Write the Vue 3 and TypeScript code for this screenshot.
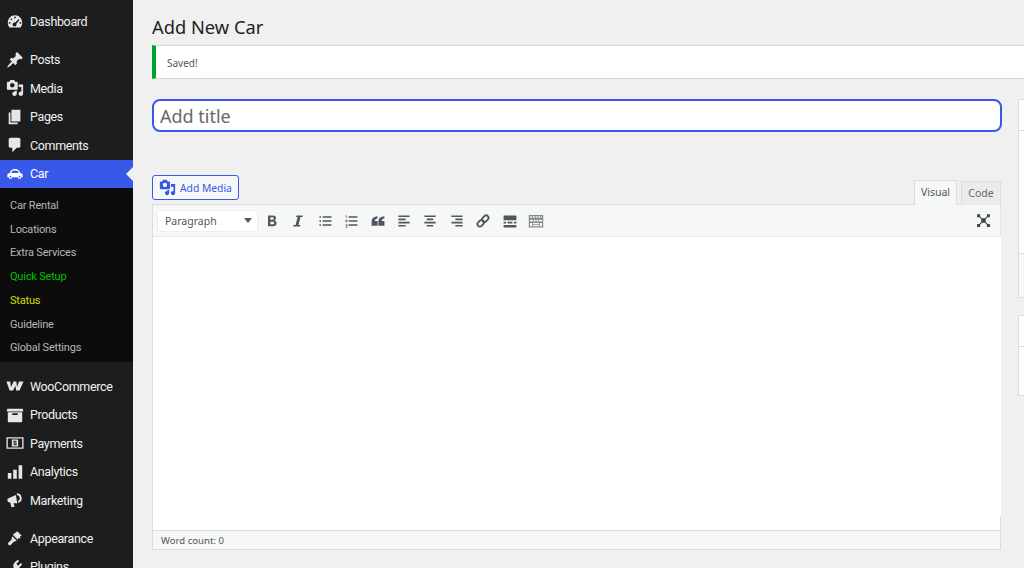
<script setup lang="ts">
type MenuItem = { label: string; icon: string; current?: boolean; gapBefore?: boolean }

const topItems: MenuItem[] = [
  { label: 'Dashboard', icon: 'dashboard' },
  { label: 'Posts', icon: 'posts', gapBefore: true },
  { label: 'Media', icon: 'media' },
  { label: 'Pages', icon: 'pages' },
  { label: 'Comments', icon: 'comments' },
  { label: 'Car', icon: 'car', current: true },
]

const subItems = [
  { label: 'Car Rental', tone: '' },
  { label: 'Locations', tone: '' },
  { label: 'Extra Services', tone: '' },
  { label: 'Quick Setup', tone: 'green' },
  { label: 'Status', tone: 'yellow' },
  { label: 'Guideline', tone: '' },
  { label: 'Global Settings', tone: '' },
]

const bottomItems: MenuItem[] = [
  { label: 'WooCommerce', icon: 'woo' },
  { label: 'Products', icon: 'products' },
  { label: 'Payments', icon: 'payments' },
  { label: 'Analytics', icon: 'analytics' },
  { label: 'Marketing', icon: 'marketing' },
  { label: 'Appearance', icon: 'appearance', gapBefore: true },
  { label: 'Plugins', icon: 'plugins' },
]

const icons: Record<string, string> = {
  dashboard: 'M3.760 16h12.480c1.100-1.430 1.760-3.210 1.760-5.140 0-4.620-3.580-8.360-8-8.360s-8 3.740-8 8.360c0 1.930.66 3.710 1.760 5.140zM10 4c.55 0 1 .45 1 1s-.45 1-1 1-1-.45-1-1 .45-1 1-1zM6 6c.55 0 1 .45 1 1s-.45 1-1 1-1-.45-1-1 .45-1 1-1zm8.010 1l1.020.87-3.450 4.130c.09.24.14.49.14.75 0 1.240-1 2.250-2.220 2.250-1.230 0-2.230-1.010-2.230-2.250S8.270 10.500 9.500 10.500c.21 0 .41.03.6.09zM4 10c.55 0 1 .45 1 1s-.45 1-1 1-1-.45-1-1 .45-1 1-1zm12 0c.55 0 1 .45 1 1s-.45 1-1 1-1-.45-1-1 .45-1 1-1z',
  posts: 'M10.440 3.020l1.820-1.820 6.360 6.350-1.830 1.820c-1.050-.68-2.480-.57-3.410.36l-.75.75c-.92.93-1.040 2.350-.35 3.410l-1.830 1.820-2.410-2.410-2.800 2.790c-.42.42-3.380 2.710-3.800 2.290s1.860-3.390 2.280-3.810l2.790-2.790L4.100 9.360l1.830-1.820c1.050.69 2.480.57 3.400-.36l.75-.75c.93-.92 1.050-2.350.36-3.410z',
  media: 'M13 11V4c0-.55-.45-1-1-1h-1.670L9 1H5L3.670 3H2c-.55 0-1 .45-1 1v7c0 .55.45 1 1 1h10c.55 0 1-.45 1-1zM7 4.500c1.380 0 2.500 1.120 2.500 2.500S8.380 9.500 7 9.500 4.500 8.380 4.500 7 5.620 4.500 7 4.500zM14 6h5v10.500c0 1.380-1.120 2.500-2.500 2.500S14 17.880 14 16.500s1.120-2.500 2.500-2.500c.17 0 .34.020.5.050V9h-3V6zm-4 8.050V13h2v3.500c0 1.380-1.120 2.500-2.500 2.500S7 17.880 7 16.500 8.120 14 9.500 14c.17 0 .34.020.5.050z',
  pages: 'M6 15V2h10v13H6zm-1 1h8v2H3V5h2v11z',
  comments: 'M5 2h9c1.100 0 2 .9 2 2v7c0 1.100-.9 2-2 2h-2l-5 5v-5H5c-1.100 0-2-.9-2-2V4c0-1.100.9-2 2-2z',
  car: 'M5.500 6.500C6.500 5 8 4.500 10 4.500s3.500.5 4.500 2L16 9l2.500 1v3.500H17a2 2 0 0 1-4 0H7a2 2 0 0 1-4 0H1.500V10L4 9zM7 6.800L6 9h8l-1-2.200c-.8-.5-1.800-.7-3-.7s-2.200.2-3 .7zM5 12a1 1 0 1 0 0 2 1 1 0 0 0 0-2zm10 0a1 1 0 1 0 0 2 1 1 0 0 0 0-2z',
  woo: 'M.500 5h4.200l.8 6 3-6h3l.7 6 2.300-6h5l-4.500 10h-3.700l-.9-5.200L7.800 15H4z',
  products: 'M19 4v2H1V4c0-.55.45-1 1-1h16c.55 0 1 .45 1 1zM2 7h16v10c0 .55-.45 1-1 1H3c-.55 0-1-.45-1-1V7zm11 3V8H7v2h6z',
  payments: 'M.500 3.500h19v13H.500zM2 5v10h16V5zM6.500 6h7v8h-7zM8.300 7.500v3h2.400v1h-2.400v1h3.400v-3H9.300v-1h2.400v-1z',
  analytics: 'M2 11h4v6.500H2zM8 7.500h4v10H8zM14 2.500h4v15h-4z',
  marketing: 'M1.500 8.500L11 4.500l1.500 9.500-4-.7 1 4.200-3.500.5-1.300-5.300-2.700-.5zM12 2.500a5.500 5.500 0 0 1 1.700 10.700l-.4-2A3.500 3.500 0 0 0 12 4.500z',
  appearance: 'M12.500 2.500l5 5-1.800.5.3 2.500-2.500-.2-.5 1.700-5.500-5.500zM7 8l5 5-2.500 1-1 .2-3 3.300c-.8.8-2 .8-2.700 0-.7-.7-.7-1.900 0-2.600l3.300-3 .2-1z',
  plugins: 'M13.100 2l1.400 1.400-3 3 2.100 2.100 3-3L18 7l-3 3.500c-1.600 1.500-3.700 1.800-5.300.9L6 15l-2 2-1-1 2-2 3.600-3.700c-.9-1.600-.6-3.700.9-5.300z',
}
</script>

<template>
  <div class="page">
    <aside class="sidebar">
      <nav class="menu">
        <a
          v-for="item in topItems"
          :key="item.label"
          class="menu-item"
          :class="{ current: item.current, 'gap-before': item.gapBefore }"
        >
          <svg class="menu-icon" viewBox="0 0 20 20" fill-rule="evenodd"><path :d="icons[item.icon]" /></svg>
          <span>{{ item.label }}</span>
        </a>
        <div class="submenu">
          <a v-for="sub in subItems" :key="sub.label" class="sub-item" :class="sub.tone">{{ sub.label }}</a>
        </div>
        <a
          v-for="item in bottomItems"
          :key="item.label"
          class="menu-item"
          :class="{ 'gap-before': item.gapBefore }"
        >
          <svg class="menu-icon" viewBox="0 0 20 20" fill-rule="evenodd"><path :d="icons[item.icon]" /></svg>
          <span>{{ item.label }}</span>
        </a>
      </nav>
    </aside>

    <main class="content">
      <h1 class="heading">Add New Car</h1>
      <div class="notice">Saved!</div>

      <div class="columns">
        <div class="primary">
          <input class="title-input" type="text" placeholder="Add title" />

          <div class="editor-top">
            <button class="add-media" type="button">
              <svg viewBox="0 0 20 20" width="17" height="17" fill="#3858e9" fill-rule="evenodd"><path :d="icons.media" /></svg>
              Add Media
            </button>
            <div class="tabs">
              <span class="tab active">Visual</span>
              <span class="tab">Code</span>
            </div>
          </div>

          <div class="editor">
            <div class="toolbar">
              <div class="format-select">
                <span>Paragraph</span>
                <i class="caret"></i>
              </div>
              <div class="tools">
                <svg class="tool" viewBox="0 0 20 20"><path d="M5 3h6c2.500 0 4 1.300 4 3.400 0 1.400-.8 2.500-2 3 1.700.4 2.700 1.700 2.700 3.400 0 2.400-1.800 3.700-4.500 3.700H5zm3 2.400v3h2.500c1.100 0 1.700-.6 1.700-1.500s-.6-1.500-1.700-1.500zm0 5.400v3.300h2.800c1.200 0 1.900-.6 1.900-1.700s-.7-1.600-1.900-1.600z" fill-rule="evenodd" /></svg>
                <svg class="tool" viewBox="0 0 20 20"><path d="M8 3h8l-.4 2h-2.500l-2.400 10H13l-.4 2H4l.4-2h2.600L9.500 5H7.600z" /></svg>
                <svg class="tool" viewBox="0 0 20 20"><path d="M3 4h2v2H3zM7 4h11v2H7zM3 9h2v2H3zM7 9h11v2H7zM3 14h2v2H3zM7 14h11v2H7z" /></svg>
                <svg class="tool" viewBox="0 0 20 20"><path d="M3 3h1.500v3H3.600V4H3zM7 4h11v2H7zM3 8.500h2.500v1L4 11h1.500v.7H3v-1l1.500-1.400H3zM7 9h11v2H7zM3 14h2.500v4H3v-.7h1.600V16.300H3.600v-.6h1V14.700H3zM7 14h11v2H7z" /></svg>
                <svg class="tool" viewBox="0 0 20 20"><path d="M9.500 4v2.500C7.300 7 6.200 8.200 6 10h3.500v6H2v-5.500C2 6.800 5 4.300 9.500 4zM18 4v2.500c-2.200.5-3.300 1.700-3.500 3.500H18v6h-7.500v-5.500c0-3.700 3-6.200 7.500-6.500z" /></svg>
                <svg class="tool" viewBox="0 0 20 20"><path d="M3 3h14v2H3zM3 7h9v2H3zM3 11h14v2H3zM3 15h9v2H3z" /></svg>
                <svg class="tool" viewBox="0 0 20 20"><path d="M3 3h14v2H3zM6 7h8v2H6zM3 11h14v2H3zM6 15h8v2H6z" /></svg>
                <svg class="tool" viewBox="0 0 20 20"><path d="M3 3h14v2H3zM8 7h9v2H8zM3 11h14v2H3zM8 15h9v2H8z" /></svg>
                <svg class="tool link-tool" viewBox="0 0 20 20">
                  <g transform="rotate(-45 10 10)" fill="none" stroke="#50575e" stroke-width="2.300">
                    <rect x="1.500" y="7" width="9" height="6" rx="3" />
                    <rect x="9.500" y="7" width="9" height="6" rx="3" />
                  </g>
                </svg>
                <svg class="tool" viewBox="0 0 20 20"><path d="M2 3h16v6H2zM2 11h3v2H2zM7 11h6v2H7zM15 11h3v2h-3zM2 15h16v3H2z" /></svg>
                <svg class="tool sink" viewBox="0 0 20 20"><path fill-rule="evenodd" d="M1 2.500h18v15.500H1zM2.500 4v2h2.500V4zm3.500 0v2h2.500V4zm3.500 0v2H12V4zM13 4v2h2.500V4zm3.500 0v2h1V4zM2.500 8.500v2h3.500v-2zm4.500 0v2h2.500v-2zm3.500 0v2h2.500v-2zm3.500 0v2h3.500v-2zM2.500 12.500v4h2.500v-4zm3.500 0v1.500h8v-1.500zm9 0v4h2.500v-4zM6 15v1.500h8V15z" /></svg>
              </div>
              <svg class="tool expand" viewBox="0 0 20 20"><path d="M7 7h6v6H7zM1.500 1.500h4v4h-4zM14.500 1.500h4v4h-4zM1.500 14.500h4v4h-4zM14.500 14.500h4v4h-4zM4.500 3.500l4.500 4.500-1 1-4.500-4.500zM15.500 3.500l1 1-4.500 4.500-1-1zM8 11l1 1-4.500 4.500-1-1zM12 11l4.500 4.500-1 1L11 12z" /></svg>
            </div>
            <div class="editor-body"></div>
            <div class="status">Word count: 0</div>
          </div>
        </div>

        <div class="side">
          <section class="side-box first">
            <div class="side-head"></div>
            <div class="side-main"></div>
            <div class="side-foot"></div>
          </section>
          <section class="side-box second">
            <div class="side-head"></div>
            <div class="side-main"></div>
          </section>
        </div>
      </div>
    </main>
  </div>
</template>

<style scoped>
.page {
  display: flex;
  width: 1024px;
  height: 568px;
  overflow: hidden;
  background: #f0f0f0;
  font-family: "Noto Sans", "Open Sans", sans-serif;
  color: #1d2327;
}

.sidebar {
  flex: 0 0 133px;
  background: #1d1d1d;
  font-family: Roboto, "Noto Sans", sans-serif;
}

.menu {
  padding-top: 7.5px;
}

.menu-item {
  display: flex;
  align-items: center;
  height: 28.5px;
  padding-left: 6px;
  color: #f0f0f1;
  font-size: 12.5px;
  letter-spacing: -0.35px;
  position: relative;
}

.menu-item.gap-before {
  margin-top: 9.6px;
}

.menu-icon {
  flex: none;
  width: 18px;
  height: 18px;
  margin-right: 6px;
  fill: #e4e6e7;
}

.menu-item.current {
  background: #3858e9;
  color: #fff;
}

.menu-item.current .menu-icon {
  fill: #fff;
}

.menu-item.current::after {
  content: "";
  position: absolute;
  right: 0;
  top: 7px;
  border: 7px solid transparent;
  border-right-color: #f0f0f0;
  border-left-width: 0;
}

.submenu {
  display: flex;
  flex-direction: column;
  height: 174px;
  padding: 6px 0 2px;
  margin-bottom: 9.7px;
  box-sizing: border-box;
  background: #0c0c0c;
}

.sub-item {
  height: 23.7px;
  line-height: 23.7px;
  padding-left: 10px;
  font-size: 11px;
  letter-spacing: -0.2px;
  color: #b4b6b7;
}

.sub-item.green {
  color: #00c200;
}

.sub-item.yellow {
  color: #d9d900;
}

.content {
  flex: 1;
  min-width: 0;
  padding-left: 19px;
}

.heading {
  margin: 0;
  padding-top: 14px;
  height: 31px;
  font-size: 18.3px;
  line-height: 26px;
  font-weight: 400;
  color: #1d2327;
  box-sizing: content-box;
}

.notice {
  height: 32px;
  line-height: 34px;
  padding-left: 11px;
  background: #fff;
  border: 1px solid #d5d5d5;
  border-left: 4px solid #00a32a;
  border-right: 0;
  font-size: 10px;
  color: #50575e;
}

.columns {
  display: flex;
  margin-top: 20px;
}

.primary {
  flex: 0 0 850px;
  width: 850px;
}

.title-input {
  display: block;
  width: 100%;
  height: 33px;
  box-sizing: border-box;
  padding: 0 6px;
  background: #fff;
  border: 2px solid #3858e9;
  border-radius: 8px;
  outline: none;
  font: 400 18px "Noto Sans", "Open Sans", sans-serif;
  color: #2c3338;
}

.title-input::placeholder {
  color: #646970;
  opacity: 1;
}

.editor-top {
  display: flex;
  align-items: flex-end;
  justify-content: space-between;
  height: 46px;
  margin-top: 26px;
}

.add-media {
  display: flex;
  align-items: center;
  gap: 4px;
  width: 87px;
  height: 25px;
  margin-bottom: 4px;
  padding: 0 0 0 6px;
  box-sizing: border-box;
  background: #f6f7f7;
  border: 1px solid #3858e9;
  border-radius: 3px;
  font: 400 10.3px "Noto Sans", "Open Sans", sans-serif;
  color: #3858e9;
}

.tabs {
  display: flex;
  align-items: flex-end;
  gap: 4px;
  margin-right: 1px;
  margin-bottom: -1px;
}

.tab {
  display: block;
  width: 40px;
  height: 24px;
  line-height: 23px;
  text-align: center;
  box-sizing: border-box;
  background: #ebebeb;
  border: 1px solid #dcdcde;
  border-bottom: 0;
  font-size: 10.5px;
  color: #646970;
}

.tab.active {
  width: 43px;
  height: 25px;
  background: #f6f7f7;
  color: #50575e;
  position: relative;
}

.editor {
  margin-right: 1px;
  background: #fff;
  border-left: 1px solid #dcdcde;
  box-sizing: border-box;
}

.toolbar {
  display: flex;
  align-items: center;
  height: 33px;
  padding: 0 4px;
  background: #f6f7f7;
  border-top: 1px solid #dcdcde;
  border-right: 1px solid #e4e4e4;
  border-bottom: 1px solid #e9e9e9;
  box-sizing: border-box;
}

.format-select {
  display: flex;
  align-items: center;
  justify-content: space-between;
  width: 101px;
  height: 22px;
  padding: 0 5px 0 7px;
  box-sizing: border-box;
  background: #fff;
  border: 1px solid #eeeeee;
  font-size: 10.5px;
  color: #50575e;
}

.caret {
  border: 4px solid transparent;
  border-top: 5px solid #50575e;
  border-bottom: 0;
}

.tools {
  display: flex;
  align-items: center;
  gap: 10.4px;
  margin-left: 6px;
}

.tool {
  flex: none;
  width: 16px;
  height: 16px;
  fill: #50575e;
}

.sink {
  fill: #85898e;
}

.expand {
  margin-left: auto;
  margin-right: 5px;
  width: 15px;
  height: 15px;
  fill: #3c434a;
}

.editor-body {
  position: relative;
  height: 293px;
  background: #fff;
}

.editor-body::after {
  content: "";
  position: absolute;
  right: 0;
  bottom: 0;
  width: 1px;
  height: 14px;
  background: #dcdcde;
}

.status {
  height: 20px;
  line-height: 19px;
  padding-left: 8px;
  background: #f6f7f7;
  border-top: 1px solid #dcdcde;
  border-right: 1px solid #dcdcde;
  border-bottom: 1px solid #dcdcde;
  box-sizing: border-box;
  font-size: 9.6px;
  color: #50575e;
}

.side {
  margin-left: 16px;
  flex: 1;
  min-width: 0;
}

.side-box {
  background: #fff;
  border: 1px solid #dcdcde;
  border-right: 0;
}

.side-head {
  height: 30px;
  border-bottom: 1px solid #dcdcde;
}

.first .side-main {
  height: 122px;
}

.first .side-foot {
  height: 43px;
  background: #f6f7f7;
  border-top: 1px solid #dcdcde;
}

.second {
  margin-top: 17px;
}

.second .side-main {
  height: 48px;
}
</style>
